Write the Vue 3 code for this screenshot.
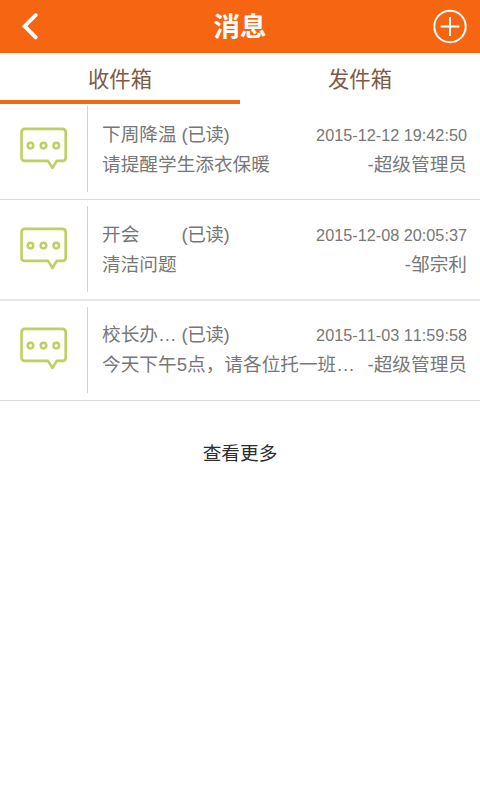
<script setup>
const messages = [
  { title: '下周降温', body: '请提醒学生添衣保暖', time: '2015-12-12 19:42:50', from: '超级管理员' },
  { title: '开会', body: '清洁问题', time: '2015-12-08 20:05:37', from: '邹宗利' },
  { title: '校长办…', body: '今天下午5点，请各位托一班…', time: '2015-11-03 11:59:58', from: '超级管理员' },
]
</script>

<template>
  <div class="page">
    <header class="bar">
      <svg class="back" width="20" height="30" viewBox="0 0 20 30">
        <path d="M15.7 3.2 L4.6 14.2 L15.7 25.4" fill="none" stroke="#fff" stroke-width="3.8" stroke-linecap="round" />
      </svg>
      <h1>消息</h1>
      <svg class="add" width="36" height="36" viewBox="0 0 36 36" fill="none" stroke="#fff">
        <circle cx="18" cy="17.5" r="15.7" stroke-width="2" />
        <path d="M18 8.1V26.9M8.6 17.5H27.4" stroke-width="2" />
      </svg>
    </header>
    <nav class="tabs">
      <div class="tab active">收件箱</div>
      <div class="tab">发件箱</div>
    </nav>
    <ul class="list">
      <li v-for="m in messages" :key="m.time" class="item">
        <div class="icon">
          <svg width="50" height="46" viewBox="0 0 50 46" fill="none" stroke="#c0cf60">
            <path d="M7 2.9H44.2Q47.7 2.9 47.7 6.4V31.4Q47.7 34.9 44.2 34.9H38.7L34.4 42L30 34.9H7Q3.5 34.9 3.5 31.4V6.4Q3.5 2.9 7 2.9Z" stroke-width="2.6" stroke-linejoin="round" />
            <g stroke-width="2.5">
              <circle cx="12.5" cy="19.6" r="2.8" />
              <circle cx="25.5" cy="19.6" r="2.8" />
              <circle cx="38.3" cy="19.6" r="2.8" />
            </g>
          </svg>
        </div>
        <div class="content">
          <div class="line">
            <span class="title">{{ m.title }}</span>
            <span class="state">(已读)</span>
            <span class="time">{{ m.time }}</span>
          </div>
          <div class="line">
            <span class="body">{{ m.body }}</span>
            <span class="from">-{{ m.from }}</span>
          </div>
        </div>
      </li>
    </ul>
    <div class="more">查看更多</div>
  </div>
</template>

<style>
body {
  margin: 0;
  background: #fff;
}
</style>

<style scoped>
.page {
  width: 480px;
  height: 800px;
  overflow: hidden;
  background: #fff;
  font-family: "Liberation Sans", "Noto Sans CJK SC", sans-serif;
  color: #777;
}
.bar {
  display: flex;
  align-items: center;
  justify-content: space-between;
  box-sizing: border-box;
  height: 53px;
  padding: 0 12px 0 20px;
  background: #f66512;
}
.bar h1 {
  margin: 2px 0 0 8px;
  font-size: 26.5px;
  line-height: 53px;
  font-weight: 700;
  color: #fff;
}
.tabs {
  display: flex;
  height: 51px;
}
.tab {
  flex: 1;
  box-sizing: border-box;
  border-bottom: 4px solid transparent;
  padding-top: 1px;
  line-height: 52px;
  height: 51px;
  text-align: center;
  font-size: 21.3px;
  color: #7d5a48;
}
.tab.active {
  border-bottom-color: #f26a18;
}
.list {
  margin: 0;
  padding: 0;
  list-style: none;
}
.item {
  display: flex;
  box-sizing: border-box;
  height: 100px;
  padding: 6px 13px 7px 0;
  border-bottom: 1px solid #dcdcdc;
}
.item:first-child {
  height: 96px;
  padding-top: 2px;
}
.item:nth-child(2) {
  height: 101px;
  border-bottom: 2px solid #e8e8e8;
}
.icon {
  box-sizing: border-box;
  width: 88px;
  flex: none;
  padding: 20px 0 0 18px;
  border-right: 1px solid #d2d2d2;
}
.icon svg {
  display: block;
}
.content {
  flex: 1;
  min-width: 0;
  padding: 14px 0 0 14px;
}
.item:last-child .icon {
  padding-top: 19.4px;
}
.item:last-child .content {
  padding-top: 13.4px;
}
.line {
  display: flex;
  align-items: baseline;
  height: 29.5px;
  line-height: 29.5px;
  font-size: 18.67px;
  white-space: nowrap;
}
.title {
  width: 79.5px;
}
.state {
  letter-spacing: -0.5px;
}
.time {
  margin-left: auto;
  font-size: 16.25px;
  font-kerning: none;
}
.from {
  margin-left: auto;
}
.more {
  margin-top: 39px;
  line-height: 28px;
  text-align: center;
  font-size: 18.67px;
  color: #2c2c2c;
}
</style>
